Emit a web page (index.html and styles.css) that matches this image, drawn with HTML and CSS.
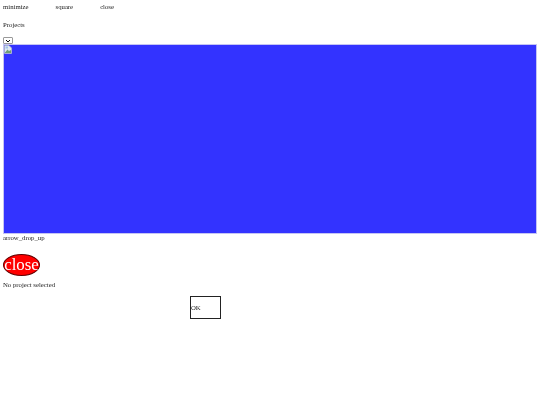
FILE: index.html
```html
<!DOCTYPE html>
<html lang="en">

<head>
    <meta charset="UTF-8">
    <title>Projects</title>
    <link rel="stylesheet" href="styles.css">
</head>

<body>
    <div class="window-bar">
        <span>minimize</span>
        <span>square</span>
        <span>close</span>
    </div>
    <p class="title">Projects</p>
    <div class="select-box">
        <svg width="6" height="4" viewBox="0 0 6 4">
            <path d="M1 1 L3 3 L5 1" fill="none" stroke="#000" stroke-width="1" />
        </svg>
    </div>
    <div class="preview">
        <svg class="broken" width="8" height="9" viewBox="0 0 8 9">
            <path d="M0.5 0.5 H5 L7.5 3 V8.5 H0.5 Z" fill="#dfe8f2" stroke="#b4bcc6" stroke-width="0.7" />
            <path d="M1 7.5 L3.5 4.5 L5 6 L7 5 V8 H1 Z" fill="#6f9f78" />
            <path d="M1.5 1.5 H4 V3.5 H1.5 Z" fill="#9fc2ea" />
        </svg>
    </div>
    <div class="arrow">arrow_drop_up</div>
    <div class="close-btn">close</div>
    <p class="status">No project selected</p>
    <div class="ok-row">
        <div class="ok-btn">OK</div>
    </div>
</body>

</html>
```

FILE: styles.css
```css
* {
    box-sizing: border-box;
    margin: 0;
    padding: 0;
}

body {
    font-family: 'Liberation Serif', serif;
    font-size: 6.75px;
    line-height: 8px;
    color: #222;
    background-color: #fff;
    padding: 3px 3px 0;
    filter: blur(0.35px);
}

.window-bar {
    display: flex;
    gap: 27px;
    height: 8px;
}

.title {
    margin-top: 10px;
}

.select-box {
    width: 10px;
    height: 7px;
    margin-top: 8px;
    border: 1px solid #999;
    border-radius: 1px;
    display: flex;
    align-items: center;
    justify-content: center;
}

.preview {
    height: 190px;
    background-color: #3333ff;
    border: 1px solid #c4c4f4;
}

.broken {
    display: block;
}

.close-btn {
    width: 37px;
    height: 22px;
    margin-top: 12px;
    background-color: #ff0000;
    color: #fff;
    border: 1px solid #600000;
    border-radius: 50%;
    font-size: 16.875px;
    line-height: 20px;
    text-align: center;
}

.status {
    margin-top: 5px;
}

.ok-row {
    margin-top: 7px;
    padding-left: 187px;
}

.ok-btn {
    width: 31px;
    height: 23px;
    border: 1px solid #222;
    display: flex;
    align-items: center;
}
```
